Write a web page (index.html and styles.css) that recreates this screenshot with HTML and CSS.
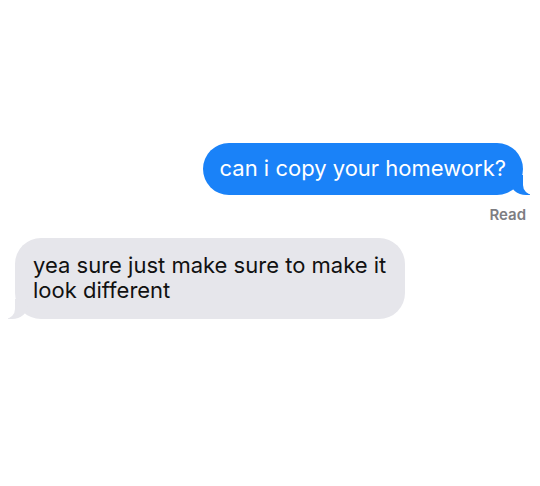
FILE: index.html
```html
<!DOCTYPE html>
<html lang="en">
<head>
    <meta charset="UTF-8">
    <title>Messages</title>
    <link rel="stylesheet" href="styles.css">
</head>
<body>
    <div class="thread">
        <div class="bubble sent">can i copy your homework?</div>
        <p class="status">Read</p>
        <div class="bubble received">yea sure just make sure to make it look different</div>
    </div>
</body>
</html>
```

FILE: styles.css
```css
* {
    margin: 0;
    padding: 0;
    box-sizing: border-box;
}
body {
    background: #fff;
    font-family: Inter, 'Liberation Sans', Arial, sans-serif;
    width: 540px;
    height: 486px;
    overflow: hidden;
}
.thread {
    display: flex;
    flex-direction: column;
    padding: 143px 17px 0 15px;
}
.bubble {
    position: relative;
    font-size: 22px;
    line-height: 25px;
    border-radius: 26px;
}
.sent {
    align-self: flex-end;
    background: #1a82f8;
    color: #fff;
    padding: 13px 17px 14px 17px;
}
.received {
    align-self: flex-start;
    width: 390px;
    background: #e6e6eb;
    color: #111;
    padding: 15px 18px 16px 18px;
    margin-top: 14px;
}
/* tails */
.bubble::before,
.bubble::after {
    content: "";
    position: absolute;
    bottom: 0;
    height: 20px;
}
.sent::before {
    right: -7px;
    width: 20px;
    background: #1a82f8;
    border-bottom-left-radius: 16px 14px;
}
.sent::after {
    right: -10px;
    width: 10px;
    background: #fff;
    border-bottom-left-radius: 10px;
}
.received::before {
    left: -7px;
    width: 20px;
    background: #e6e6eb;
    border-bottom-right-radius: 16px 14px;
}
.received::after {
    left: -10px;
    width: 10px;
    background: #fff;
    border-bottom-right-radius: 10px;
}
.status {
    align-self: flex-end;
    margin: 11px -3px 0 0;
    font-size: 15px;
    font-weight: 600;
    color: #7d7d82;
    line-height: 18px;
}
```
